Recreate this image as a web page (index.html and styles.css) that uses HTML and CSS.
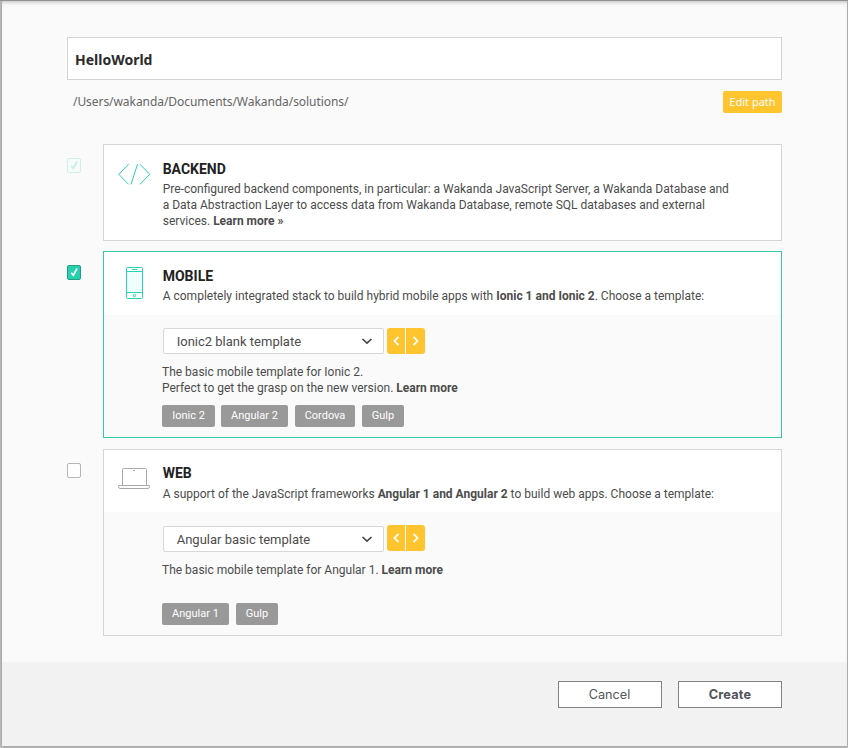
FILE: index.html
```html
<!DOCTYPE html>
<html lang="en">
<head>
<meta charset="utf-8">
<title>New solution</title>
<link rel="stylesheet" href="styles.css">
</head>
<body>
<form class="dialog">
  <main class="content">
    <input class="name" type="text" value="HelloWorld" aria-label="Solution name">
    <div class="path-row">
      <span class="path">/Users/wakanda/Documents/Wakanda/solutions/</span>
      <button class="edit" type="button">Edit path</button>
    </div>

    <section class="option backend">
      <span class="check checked disabled"><svg width="14" height="15" viewBox="0 0 14 15"><path d="M4.200 7.800 6.300 10.300 10 3.500"/></svg></span>
      <div class="card">
        <div class="head">
          <svg class="icon teal" width="34" height="34" viewBox="0 0 34 34"><path d="M10.500 7.300 .8 17.300 10.500 27.300M22 7.300 31.800 17.300 22 27.300M19.500 7.300 13 27.300"/></svg>
          <div>
            <h2>BACKEND</h2>
            <p>Pre-configured backend components, in particular: a Wakanda JavaScript Server, a Wakanda Database and<br>a Data Abstraction Layer to access data from Wakanda Database, remote SQL databases and external<br>services. <b>Learn more »</b></p>
          </div>
        </div>
      </div>
    </section>

    <section class="option mobile">
      <span class="check checked"><svg width="14" height="15" viewBox="0 0 14 15"><path d="M4.200 7.800 6.300 10.300 10 3.500"/></svg></span>
      <div class="card selected">
        <div class="head">
          <svg class="icon teal" width="34" height="34" viewBox="0 0 34 34"><rect x="8.500" y="1.500" width="16" height="31" rx="1" fill="#fff"/><path d="M8.500 5.500h16v21h-16z" fill="#effffd"/><path d="M14 3.500h5"/><circle cx="16.500" cy="29.500" r="1.200"/></svg>
          <div>
            <h2>MOBILE</h2>
            <p>A completely integrated stack to build hybrid mobile apps with <b>Ionic 1 and Ionic 2</b>. Choose a template:</p>
          </div>
        </div>
        <div class="template">
          <div class="picker">
            <div class="select"><span>Ionic2 blank template</span><svg width="12" height="8" viewBox="0 0 12 8"><path d="m1.500 2 4.500 4.200 4.500-4.200"/></svg></div>
            <div class="arrows"><button type="button" aria-label="Previous"><svg width="8" height="12" viewBox="0 0 8 12"><path d="M6.500 1.800 2.500 6l4 4.200"/></svg></button><button type="button" aria-label="Next"><svg width="8" height="12" viewBox="0 0 8 12"><path d="m1.500 1.800 4 4.200-4 4.200"/></svg></button></div>
          </div>
          <p class="about">The basic mobile template for Ionic 2.<br>Perfect to get the grasp on the new version. <b>Learn more</b></p>
          <div class="tags"><span class="w53">Ionic 2</span><span class="w67">Angular 2</span><span class="w60">Cordova</span><span class="w42">Gulp</span></div>
        </div>
      </div>
    </section>

    <section class="option web">
      <span class="check"></span>
      <div class="card">
        <div class="head">
          <svg class="icon gray" width="34" height="34" viewBox="0 0 34 34"><path d="M4.500 24.500v-16q0-1 1-1h22q1 0 1 1v16M.5 24.500h31v1q0 2-1.500 2h-28q-1.500 0-1.500-2zM15 9.500h2"/></svg>
          <div>
            <h2>WEB</h2>
            <p>A support of the JavaScript frameworks <b>Angular 1 and Angular 2</b> to build web apps. Choose a template:</p>
          </div>
        </div>
        <div class="template">
          <div class="picker">
            <div class="select"><span>Angular basic template</span><svg width="12" height="8" viewBox="0 0 12 8"><path d="m1.500 2 4.500 4.200 4.500-4.200"/></svg></div>
            <div class="arrows"><button type="button" aria-label="Previous"><svg width="8" height="12" viewBox="0 0 8 12"><path d="M6.500 1.800 2.500 6l4 4.200"/></svg></button><button type="button" aria-label="Next"><svg width="8" height="12" viewBox="0 0 8 12"><path d="m1.500 1.800 4 4.200-4 4.200"/></svg></button></div>
          </div>
          <p class="about">The basic mobile template for Angular 1. <b>Learn more</b></p>
          <div class="tags"><span class="w67">Angular 1</span><span class="w42">Gulp</span></div>
        </div>
      </div>
    </section>
  </main>
  <footer class="footer">
    <button type="button">Cancel</button>
    <button class="create" type="button">Create</button>
  </footer>
</form>
</body>
</html>
```
FILE: styles.css
```css
* { box-sizing: border-box; }
body {
  margin: 0;
  height: 748px;
  padding: 0 1px 2px 2px;
  background: #c0c0c0;
  border-top: 1px solid #929090;
  font-family: Roboto, "Liberation Sans", sans-serif;
  color: #4c4c4c;
  overflow: hidden;
}
p, h2 { margin: 0; }
button { font: inherit; padding: 0; margin: 0; border: 0; }
svg { display: block; fill: none; }
.dialog {
  height: 745px;
  background: #fafafa;
  box-shadow: 0 0 3px #888, inset 0 4px 4px -3px #bbb;
  display: flex;
  flex-direction: column;
}
.content { height: 661px; padding: 36px 65px 0; }
.name {
  display: block;
  width: 715px;
  height: 43px;
  padding: 2px 7px 0;
  border: 1px solid #d3d3d3;
  background: #fff;
  color: #2b2b2b;
  font: bold 14px "Noto Sans", sans-serif;
}
.path-row {
  display: flex;
  justify-content: space-between;
  margin-top: 11px;
  height: 22px;
  width: 715px;
}
.path {
  padding-left: 6px;
  font: 12px/22px "Noto Sans", sans-serif;
  letter-spacing: -0.060px;
  color: #666;
}
.edit {
  width: 59px;
  background: #ffc42e;
  color: #fff;
  border-radius: 2px;
  font: 11px/22px "Noto Sans", sans-serif;
}
.option { display: flex; width: 715px; }
.backend { margin-top: 31px; }
.mobile { margin-top: 10px; }
.web { margin-top: 11px; }
.check {
  width: 14px;
  height: 15px;
  margin: 14px 22px 0 0;
  border: 1px solid #b5b5b5;
  border-radius: 2px;
  background: #fff;
}
.check svg { margin: -1px; stroke: #fff; stroke-width: 1.700; }
.check.checked { background: #25d0ae; border-color: #259c86; }
.check.disabled { background: #f8fbfa; border-color: #c9f1e8; }
.check.disabled svg { stroke: #c3f1e7; }
.card {
  width: 679px;
  height: 187px;
  border: 1px solid #d5d5d5;
  background: #fff;
}
.backend .card { height: 97px; }
.card.selected { border-color: #35c9aa; }
.head { display: flex; height: 63px; padding: 14px 0 0 14px; }
.icon { margin-right: 10.700px; flex: none; stroke-width: 1; }
.teal { stroke: #27d3b1; }
.gray { stroke: #a9a9a9; }
.backend .icon { margin-top: -2px; }
.web .icon { margin-top: -2px; }
h2 { font-size: 14px; line-height: 20px; font-weight: 700; color: #222; }
p { font-size: 12px; line-height: 16px; white-space: nowrap; }
.head p { margin-top: 2px; }
.template {
  height: 122px;
  padding: 13px 0 0 58px;
  background: #fafafa;
}
.web .head { height: 62px; padding-top: 13px; }
.web .head p { margin-top: 3px; }
.web .template { height: 123px; padding-top: 14px; }
.picker { display: flex; gap: 3px; margin-left: 1px; }
.select {
  display: flex;
  align-items: center;
  justify-content: space-between;
  width: 221px;
  height: 26px;
  padding: 0 10px 0 12.700px;
  border: 1px solid #d8d8d8;
  border-radius: 2px;
  background: #fff;
  font-size: 13px;
}
.select svg { stroke: #444; stroke-width: 1.600; }
.arrows { display: flex; gap: 1px; }
.web .arrows { margin-top: -1px; }
.arrows button {
  display: grid;
  place-items: center;
  width: 18px;
  height: 26px;
  background: #ffc42e;
  border-radius: 3px 0 0 3px;
}
.arrows button + button { width: 19px; border-radius: 0 3px 3px 0; }
.arrows svg { stroke: #fff; stroke-width: 1.800; }
.about { height: 32px; margin-top: 10px; }
.web .picker { height: 26px; }
.tags { display: flex; gap: 7px; margin-top: 9px; }
.tags span {
  height: 22px;
  border-radius: 2px;
  background: #999;
  color: #fff;
  font-size: 11px;
  line-height: 21px;
  text-align: center;
}
.tags .w53 { width: 53px; margin-right: -1px; }
.w67 { width: 67px; }
.w60 { width: 60px; }
.w42 { width: 42px; }
.footer {
  display: flex;
  justify-content: flex-end;
  gap: 16px;
  flex: 1;
  padding: 19px 65px 0 0;
  background: #f2f2f2;
}
.footer button {
  width: 104px;
  height: 27px;
  padding: 0 1px 1px 0;
  border: 1px solid #828286;
  background: #fff;
  color: #53565c;
  font: 12.700px Inter, sans-serif;
}
.footer .create { padding-right: 0; font-weight: 700; letter-spacing: 0.200px; }
```
